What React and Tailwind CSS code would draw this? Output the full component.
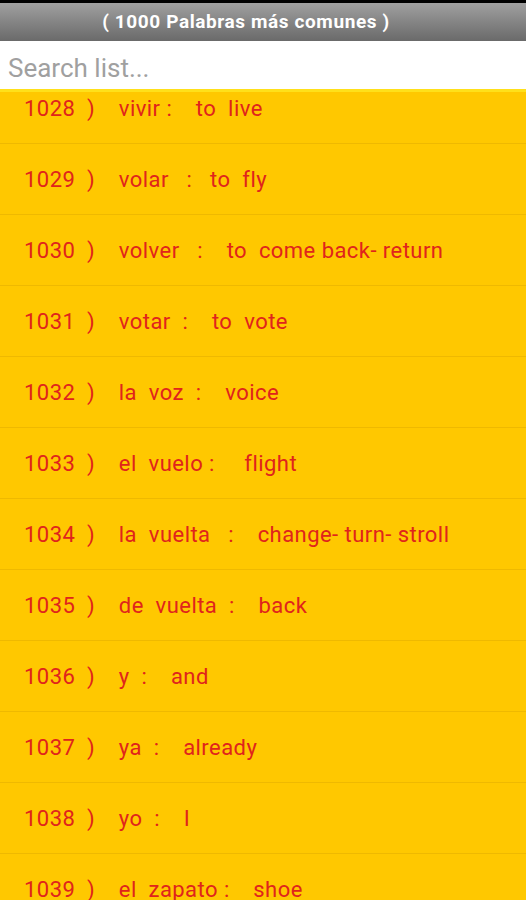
export default function App() {
  const rows = [
    ["1028", "vivir :    to  live"],
    ["1029", "volar   :   to  fly"],
    ["1030", "volver   :    to  come back- return"],
    ["1031", "votar  :    to  vote"],
    ["1032", "la  voz  :    voice"],
    ["1033", "el  vuelo :     flight"],
    ["1034", "la  vuelta   :    change- turn- stroll"],
    ["1035", "de  vuelta  :    back"],
    ["1036", "y  :    and"],
    ["1037", "ya  :    already"],
    ["1038", "yo  :    I"],
    ["1039", "el  zapato :    shoe"],
    ["1040", "la  zona :    zone"],
  ];
  return (
    <div className="w-[526px] h-[900px] overflow-hidden flex flex-col bg-[#ffc800]" style={{ fontFamily: "Roboto, 'Noto Sans', sans-serif" }}>
      <div className="h-[3px] bg-black shrink-0" />
      <div className="h-[38px] shrink-0 flex items-center justify-center pr-[34px] bg-gradient-to-b from-[#a0a0a0] to-[#6a6a6a]">
        <span className="text-white font-bold text-[19px] tracking-[0.6px] whitespace-pre">( 1000 Palabras más comunes )</span>
      </div>
      <div className="h-[48px] shrink-0 bg-white flex items-center px-[8px] pt-[6px]">
        <span className="text-[#a0a0a0] text-[26px]">Search list...</span>
      </div>
      <div className="h-[3px] shrink-0 bg-[#ffe01a]" />
      <div className="flex-1 overflow-hidden">
        <div className="-mt-[19px] flex flex-col">
          {rows.map(([n, r], i) => (
            <div key={i} className="h-[71px] shrink-0 flex items-center pl-[24px] border-b border-[#efb900]">
              <span className="whitespace-pre text-[#e0241c] text-[22px] tracking-[0.45px]">{n + "  )    " + r}</span>
            </div>
          ))}
        </div>
      </div>
    </div>
  );
}
